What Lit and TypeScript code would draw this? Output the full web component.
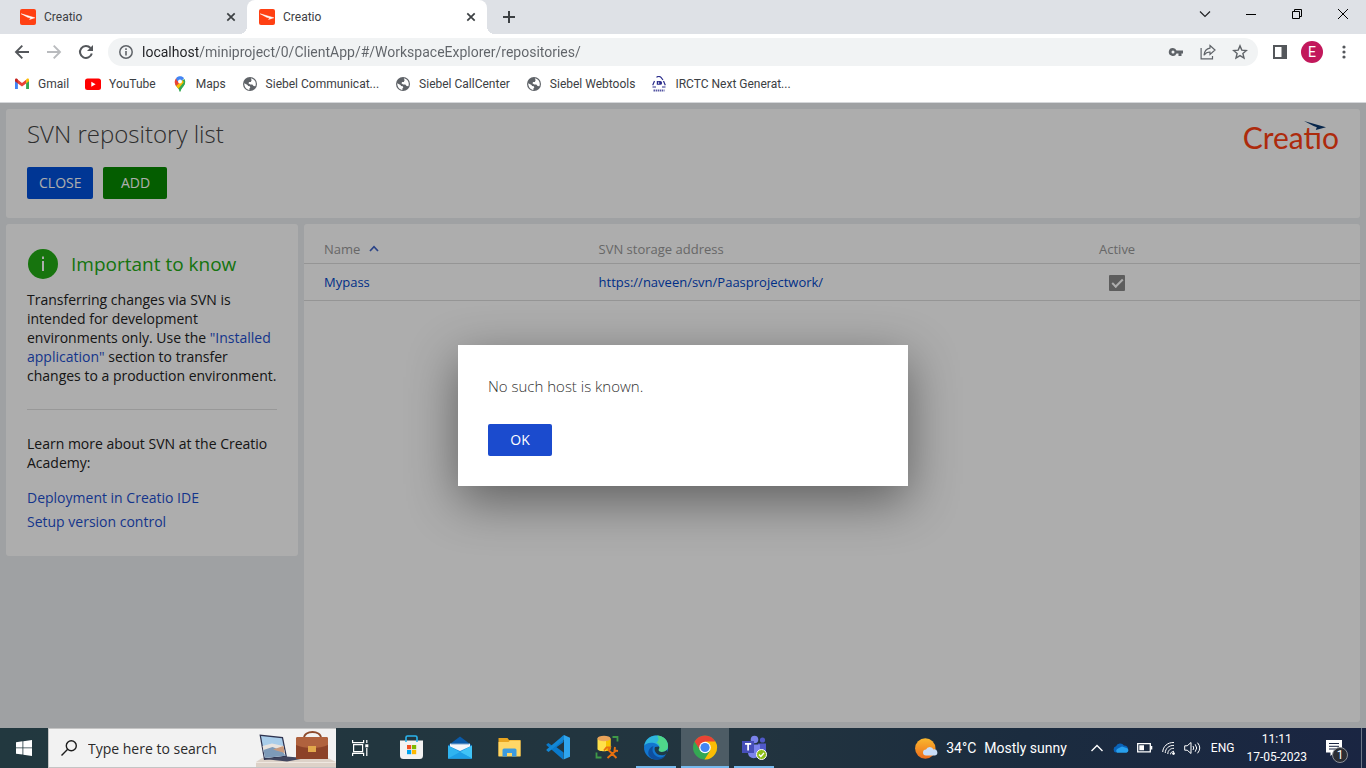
import { LitElement, html, css, svg, nothing } from "lit";
import { customElement, property } from "lit/decorators.js";
import { classMap } from "lit/directives/class-map.js";

const base = css`
  *,
  *::before,
  *::after {
    box-sizing: border-box;
  }
  button,
  input {
    font: inherit;
    color: inherit;
    border: 0;
    background: none;
    padding: 0;
    margin: 0;
  }
  a {
    text-decoration: none;
    color: inherit;
  }
  svg {
    display: block;
    flex: none;
  }
`;

const favicon = html`<svg width="16" height="16" viewBox="0 0 16 16">
  <rect width="16" height="16" rx="2" fill="#ff4013" />
  <path d="M1.200 4.800 14.800 8.800 9.600 10.400 10.800 8.900 7.600 8.200Z" fill="#fff" stroke="#fff" stroke-width=".5" />
</svg>`;

const cross = html`<svg width="10" height="10" viewBox="0 0 10 10">
  <path d="M1.3 1.3 8.7 8.7M8.7 1.3 1.3 8.7" stroke="#3c4043" stroke-width="1.7" />
</svg>`;

const globe = html`<svg width="16" height="16" viewBox="0 0 16 16">
  <circle cx="8" cy="8" r="7" fill="#5f6368" />
  <path
    d="M2.200 7.200 5.600 9 6 10 7.800 10.300 8.300 11.500 7.400 12.500v1.400C4.600 13.700 2.200 11 2.200 7.200ZM8.800 2.300C12 3 13.800 5.200 13.800 8c0 .9-.2 1.600-.5 2.300L11.600 9.900 10.300 8.400H8.100L6.400 7.300 7.100 5.900H8.800L9.600 4.300Z"
    fill="#fff"
  />
</svg>`;

const gmail = html`<svg width="16" height="16" viewBox="0 0 16 16">
  <path d="M1 4.200V13h2.900V6.800Z" fill="#4285f4" />
  <path d="M15 4.200V13h-2.900V6.800Z" fill="#34a853" />
  <path d="M12.100 3.600V7.500L15 5.300V3.800C15 2.400 13.400 2.200 12.600 2.900Z" fill="#fbbc04" />
  <path d="M3.900 7.500V3.800L8 6.900 12.100 3.800V7.500L8 10.600Z" fill="#ea4335" />
  <path d="M1 5.300V3.800C1 2.400 2.600 2.200 3.400 2.900L3.900 3.300V7.500Z" fill="#c5221f" />
</svg>`;

const youtube = html`<svg width="16" height="16" viewBox="0 0 16 16">
  <rect y="2.500" width="16" height="11.500" rx="2.500" fill="#f00" />
  <path d="M6.300 5.700v5L10.600 8.200Z" fill="#fff" />
</svg>`;

const maps = html`<svg width="16" height="16" viewBox="0 0 16 16">
  <path d="M8 16C7.300 13 4.400 11.200 3.300 8.600L12.500 3c1.700 3.700-.2 6-1.700 8C9.400 12.800 8.700 13.800 8 16Z" fill="#34a853" />
  <path d="M4 9.800 9.900 3 12.300 7C11 9.500 8 11.300 6.500 13.100Z" fill="#fbbc04" />
  <path d="M3.300 8.600C2.300 6.500 2.600 4 4.100 2.300L8.400 5.900 4 10Z" fill="#ea4335" />
  <path d="M4.100 2.300C6-.2 10-.3 12 2.200L8 7 4.900 4.400Z" fill="#4285f4" />
  <path d="M9.300 13.200C10.800 10.500 13.800 8.500 13 4.700L6.600 12.500 8 16Z" fill="#34a853" />
  <circle cx="8" cy="5.400" r="2" fill="#fff" />
</svg>`;

const irctc = html`<svg width="16" height="16" viewBox="0 0 16 16">
  <g fill="none" stroke="#2b2d8c" stroke-width="1.200">
    <path d="M5.500 1.400A3 3 0 0 1 10 1.400L12 4" />
    <path d="M3.500 5 1.700 9.200M1.500 11h3.500M12.500 5 14.300 9.200M14.500 11h-3.500" />
  </g>
  <path d="M5.800 5h3.400a1.800 1.800 0 0 1 0 3.800H5.800Z" fill="#2b2d8c" />
  <path d="M7.700 5.800v2.200" stroke="#fff" stroke-width=".8" />
  <path d="M2.500 14.500h11" stroke="#2b2d8c" stroke-width="1.800" stroke-dasharray="1.500 .6" opacity=".8" />
</svg>`;

const bookmarks = [
  { label: "Gmail", icon: gmail },
  { label: "YouTube", icon: youtube },
  { label: "Maps", icon: maps },
  { label: "Siebel Communicat...", icon: globe },
  { label: "Siebel CallCenter", icon: globe },
  { label: "Siebel Webtools", icon: globe },
  { label: "IRCTC Next Generat...", icon: irctc },
];

@customElement("browser-chrome")
export class BrowserChrome extends LitElement {
  static styles = [
    base,
    css`
      :host {
        display: block;
        flex: none;
        font: 12px/16px Roboto, "Noto Sans", sans-serif;
        color: #3c4043;
        background: #fff;
        border-bottom: 1px solid #d5d7da;
      }
      .strip {
        display: flex;
        height: 34px;
        background: #dee1e6;
      }
      .tab {
        position: relative;
        display: flex;
        align-items: center;
        gap: 8px;
        width: 240px;
        padding: 0 11px 0 12px;
        border-radius: 8px 8px 0 0;
      }
      .tab.first {
        margin-left: 8px;
        width: 239px;
      }
      .tab.active {
        background: #fff;
      }
      .tab.active::before,
      .tab.active::after {
        content: "";
        position: absolute;
        bottom: 0;
        width: 8px;
        height: 8px;
      }
      .tab.active::before {
        right: 100%;
        background: radial-gradient(circle at 0 0, #0000 8px, #fff 8px);
      }
      .tab.active::after {
        left: 100%;
        background: radial-gradient(circle at 100% 0, #0000 8px, #fff 8px);
      }
      .tab-title {
        flex: 1;
      }
      .icon {
        display: grid;
        place-items: center;
      }
      .tab .icon {
        width: 10px;
      }
      .new-tab {
        width: 44px;
      }
      .window {
        display: flex;
        margin-left: auto;
      }
      .window .icon {
        width: 46px;
        height: 28px;
      }
      .toolbar {
        display: flex;
        align-items: center;
        height: 36px;
        padding: 0 6px;
      }
      .toolbar .icon {
        width: 32px;
        height: 28px;
      }
      .omnibox {
        flex: 1;
        display: flex;
        align-items: center;
        margin: 0 6px;
        padding: 0 2px;
        height: 28px;
        border-radius: 14px;
        background: #f1f3f4;
      }
      .url {
        flex: 1;
        min-width: 0;
        font-size: 14px;
        line-height: 20px;
        color: transparent;
        background: linear-gradient(90deg, #202124 56px, #5f6368 56px);
        background-clip: text;
        -webkit-background-clip: text;
      }
      .avatar {
        display: grid;
        place-items: center;
        width: 22px;
        height: 22px;
        border-radius: 50%;
        background: #c2185b;
        color: #fff;
        font-size: 14px;
      }
      .bookmarks {
        display: flex;
        gap: 16px;
        padding: 0 14px 4px;
      }
      .bookmark {
        display: flex;
        align-items: center;
        gap: 8px;
        height: 28px;
        white-space: nowrap;
      }
    `,
  ];

  render() {
    return html`
      <div class="strip">
        ${[0, 1].map(
          (i) => html`<div class=${classMap({ tab: true, first: i === 0, active: i === 1 })}>
            ${favicon}<span class="tab-title">Creatio</span>
            <button class="icon" aria-label="Close tab">${cross}</button>
          </div>`
        )}
        <button class="icon new-tab" aria-label="New tab">
          <svg width="12" height="12" viewBox="0 0 12 12"><path d="M6 0v12M0 6h12" stroke="#3c4043" stroke-width="2" /></svg>
        </button>
        <div class="window">
          <button class="icon" aria-label="Search tabs">
            <svg width="12" height="8" viewBox="0 0 12 8"><path d="M1 1.500 6 6.500 11 1.500" fill="none" stroke="#202124" stroke-width="1.200" /></svg>
          </button>
          <button class="icon" aria-label="Minimize">
            <svg width="10" height="10" viewBox="0 0 10 10"><path d="M0 5.500h10" stroke="#000" /></svg>
          </button>
          <button class="icon" aria-label="Restore">
            <svg width="10" height="10" viewBox="0 0 10 10">
              <path d="M.5 2.500h7v7h-7ZM2.500 2.500V.5h7v7H7.500" fill="none" stroke="#000" />
            </svg>
          </button>
          <button class="icon" aria-label="Close">
            <svg width="12" height="12" viewBox="0 0 12 12"><path d="M1 1 11 11M11 1 1 11" stroke="#000" /></svg>
          </button>
        </div>
      </div>
      <div class="toolbar">
        <button class="icon" aria-label="Back">
          <svg width="16" height="16" viewBox="0 0 16 16">
            <path d="M15 8H2.500M8.300 1.700 2 8l6.300 6.300" fill="none" stroke="#54575b" stroke-width="1.900" />
          </svg>
        </button>
        <button class="icon" aria-label="Forward">
          <svg width="16" height="16" viewBox="0 0 16 16">
            <path d="M1 8h12.500M7.700 1.700 14 8l-6.300 6.300" fill="none" stroke="#b9bbbe" stroke-width="1.900" />
          </svg>
        </button>
        <button class="icon" aria-label="Reload">
          <svg width="16" height="16" viewBox="0 0 16 16">
            <path d="M13.800 9.500A6 6 0 1 1 12.500 4" fill="none" stroke="#54575b" stroke-width="2" />
            <path d="M15 1v6H9Z" fill="#54575b" />
          </svg>
        </button>
        <div class="omnibox">
          <button class="icon" aria-label="Site information">
            <svg width="14" height="14" viewBox="0 0 14 14">
              <circle cx="7" cy="7" r="6.200" fill="none" stroke="#5f6368" stroke-width="1.500" />
              <path d="M7 6v4.500M7 3.300v1.600" stroke="#5f6368" stroke-width="1.600" />
            </svg>
          </button>
          <input
            class="url"
            aria-label="Address"
            value="localhost/miniproject/0/ClientApp/#/WorkspaceExplorer/repositories/"
          />
          <button class="icon" aria-label="Passwords">
            <svg width="16" height="16" viewBox="0 0 16 16">
              <path
                fill-rule="evenodd"
                d="M5 4a4 4 0 1 0 3.500 5.500H10.500V12h3V9.500H15v-3H8.500A4 4 0 0 0 5 4ZM5 6.500a1.500 1.500 0 1 1 0 3 1.500 1.500 0 0 1 0-3Z"
                fill="#5f6368"
              />
            </svg>
          </button>
          <button class="icon" aria-label="Share">
            <svg width="16" height="16" viewBox="0 0 16 16" fill="none" stroke="#5f6368" stroke-width="1.200">
              <path d="M1.100 4v10.900h11.400V12" />
              <path d="M10 1.500 15 6 10 10.400V8C7.300 8 5.500 9 4 11.200 4.400 7.300 6.500 4.600 10 4.100Z" />
            </svg>
          </button>
          <button class="icon" aria-label="Bookmark this tab">
            <svg width="16" height="16" viewBox="0 0 16 16">
              <path
                d="m8 1.900 1.800 4.200 4.600.4-3.500 3 1.100 4.500L8 11.600 4 14l1.100-4.500-3.500-3 4.600-.4Z"
                fill="none"
                stroke="#5f6368"
                stroke-width="1.400"
              />
            </svg>
          </button>
        </div>
        <button class="icon" aria-label="Side panel">
          <svg width="14" height="14" viewBox="0 0 14 14">
            <path d="M1 1h12v12H1Z" fill="none" stroke="#54575b" stroke-width="2" />
            <path d="M8.500 0H14v14H8.500Z" fill="#54575b" />
          </svg>
        </button>
        <button class="icon" aria-label="Profile"><span class="avatar">E</span></button>
        <button class="icon" aria-label="Menu">
          <svg width="4" height="14" viewBox="0 0 4 14" fill="#54575b">
            <circle cx="2" cy="2" r="1.600" /><circle cx="2" cy="7" r="1.600" /><circle cx="2" cy="12" r="1.600" />
          </svg>
        </button>
      </div>
      <nav class="bookmarks" aria-label="Bookmarks">
        ${bookmarks.map((b) => html`<a class="bookmark" href="#">${b.icon}<span>${b.label}</span></a>`)}
      </nav>
    `;
  }
}

@customElement("repository-page")
export class RepositoryPage extends LitElement {
  static styles = [
    base,
    css`
      :host {
        flex: 1;
        min-height: 0;
        display: flex;
        flex-direction: column;
        gap: 6px;
        padding: 6px;
        background: #ebedf0;
        color: #222;
        font: 14px/19px "Open Sans", "Noto Sans", sans-serif;
      }
      .card {
        background: #fff;
        border-radius: 3px;
      }
      .header {
        display: flex;
        justify-content: space-between;
        align-items: flex-start;
        padding: 8px 21px 19px;
      }
      h1 {
        margin: 0 0 17px;
        font-weight: 300;
        font-size: 24px;
        line-height: 33px;
        color: #444;
      }
      .actions {
        display: flex;
        gap: 10px;
      }
      .btn {
        min-width: 64px;
        height: 32px;
        padding: 0 12px 2px;
        border-radius: 2px;
        color: #fff;
        background: #0050da;
      }
      .btn.add {
        background: #078a00;
      }
      .logo {
        position: relative;
        font: 30px/40px Lato, sans-serif;
        color: #ff4013;
      }
      .bird {
        position: absolute;
        top: 4px;
        right: 13px;
      }
      .columns {
        flex: 1;
        display: flex;
        align-items: flex-start;
        gap: 6px;
        min-height: 0;
      }
      .info {
        width: 292px;
        flex: none;
        padding: 25px 20px 22px 21px;
      }
      .info-title {
        display: flex;
        align-items: center;
        gap: 13px;
        margin: 0 0 11px;
        padding-left: 1px;
        font-size: 19px;
        font-weight: 400;
        line-height: 30px;
        color: #22ab15;
      }
      p {
        margin: 0;
      }
      hr {
        margin: 24px 1px 24px 0;
        border: 0;
        border-top: 1px solid #e0e0e0;
      }
      .info a {
        color: #1d4fce;
      }
      .links {
        margin: 14px 0 0;
        padding: 0;
        list-style: none;
        line-height: 24px;
      }
      .list {
        flex: 1;
        align-self: stretch;
      }
      table {
        width: 100%;
        table-layout: fixed;
        border-collapse: collapse;
        font-size: 13px;
        line-height: 18px;
      }
      th,
      td {
        text-align: left;
        border-bottom: 1px solid #dcdcdc;
        font-weight: 400;
      }
      th {
        padding: 16px 20px 5px;
        color: #999;
      }
      td {
        height: 37px;
        padding: 0 20px;
      }
      td a {
        color: #0046c8;
      }
      .name {
        width: 26%;
      }
      .address {
        width: 47%;
      }
      .active {
        width: 8%;
      }
      .center {
        text-align: center;
      }
      .sort {
        display: flex;
        align-items: center;
        gap: 9px;
      }
      input {
        appearance: none;
        display: inline-grid;
        place-items: center;
        width: 16px;
        height: 16px;
        border-radius: 1px;
        background: #8a8a8a;
        vertical-align: middle;
      }
      input::after {
        content: "";
        width: 11px;
        height: 6px;
        margin-bottom: 3px;
        border: solid #fff;
        border-width: 0 0 2px 2px;
        transform: rotate(-45deg);
      }
    `,
  ];

  render() {
    return html`
      <header class="card header">
        <div>
          <h1>SVN repository list</h1>
          <div class="actions">
            <button class="btn">CLOSE</button>
            <button class="btn add">ADD</button>
          </div>
        </div>
        <div class="logo" role="img" aria-label="Creatio">
          Creatıo
          <svg class="bird" width="22" height="10" viewBox="0 0 22 10">
            <path d="M0 0 22 6.300 11.800 9 12.800 6.300 9.500 5Z" fill="#0c3a70" />
          </svg>
        </div>
      </header>
      <div class="columns">
        <aside class="card info">
          <h2 class="info-title">
            <svg width="30" height="30" viewBox="0 0 30 30">
              <circle cx="15" cy="15" r="15" fill="#22ab15" />
              <path d="M15 12v10M15 7.500v2.500" stroke="#fff" stroke-width="2" />
            </svg>
            Important to know
          </h2>
          <p>
            Transferring changes via SVN is intended for development environments only. Use the
            <a href="#">"Installed application"</a> section to transfer changes to a production environment.
          </p>
          <hr />
          <p>Learn more about SVN at the Creatio Academy:</p>
          <ul class="links">
            <li><a href="#">Deployment in Creatio IDE</a></li>
            <li><a href="#">Setup version control</a></li>
          </ul>
        </aside>
        <main class="card list">
          <table>
            <thead>
              <tr>
                <th class="name">
                  <span class="sort"
                    >Name
                    <svg width="10" height="8" viewBox="0 0 10 8">
                      <path d="M1 6 5 1.700 9 6" fill="none" stroke="#3f63c8" stroke-width="1.700" /></svg
                  ></span>
                </th>
                <th class="address">SVN storage address</th>
                <th class="active center">Active</th>
                <th></th>
              </tr>
            </thead>
            <tbody>
              <tr>
                <td><a href="#">Mypass</a></td>
                <td><a href="#">https://naveen/svn/Paasprojectwork/</a></td>
                <td class="center"><input type="checkbox" aria-label="Active" checked /></td>
                <td></td>
              </tr>
            </tbody>
          </table>
        </main>
      </div>
    `;
  }
}

@customElement("message-dialog")
export class MessageDialog extends LitElement {
  @property() message = "";

  static styles = [
    base,
    css`
      :host {
        position: absolute;
        inset: 0;
        display: grid;
        place-items: center;
        background: rgba(0, 0, 0, 0.32);
        font: 14px/22px "Open Sans", "Noto Sans", sans-serif;
      }
      .box {
        width: 450px;
        padding: 30px;
        background: #fff;
        box-shadow: 0 15px 50px rgba(0, 0, 0, 0.45);
      }
      p {
        margin: 0 0 27px;
        font-weight: 300;
        font-size: 15px;
        color: #333;
      }
      button {
        display: block;
        width: 64px;
        height: 32px;
        border-radius: 2px;
        color: #fff;
        background: #1b4bce;
      }
    `,
  ];

  render() {
    return html`<div class="box" role="alertdialog" aria-label="Message">
      <p>${this.message}</p>
      <button>OK</button>
    </div>`;
  }
}

const apps = [
  {
    name: "Microsoft Store",
    state: "",
    icon: svg`
      <path d="M1 5.500h23v15A3.500 3.500 0 0 1 20.500 24h-16A3.500 3.500 0 0 1 1 20.500Z" fill="#f3f3f3"/>
      <path d="M7 7V2.500A1.500 1.500 0 0 1 8.500 1h8A1.500 1.500 0 0 1 18 2.500V7" fill="none" stroke="#2bb5ee" stroke-width="1.600"/>
      <path d="M8 10h4.200v4.200H8Z" fill="#f25022"/><path d="M13 10h4.200v4.200H13Z" fill="#7fba00"/>
      <path d="M8 15h4.200v4.200H8Z" fill="#00a4ef"/><path d="M13 15h4.200v4.200H13Z" fill="#ffb900"/>`,
  },
  {
    name: "Mail",
    state: "",
    icon: svg`
      <path d="M0 10.500 12 1.500 24 10.500Z" fill="#0a5aa8"/>
      <path d="M0 10.500h24v13H0Z" fill="#1f8fdc"/>
      <path d="M2 8.500h20v3L12 16 2 11.500Z" fill="#f5f7fa"/>
      <path d="M2 8.500h20l-1 .8H3Z" fill="#0a5aa8"/>
      <path d="M0 10.500 12 17 24 23.500H0Z" fill="#2fb4f0"/>
      <path d="M24 10.500V23.500L12 17Z" fill="#40c4f7"/>
      <path d="M0 23.500 12 17 24 23.500Z" fill="#1e9fe6"/>`,
  },
  {
    name: "File Explorer",
    state: "",
    icon: svg`
      <path d="M1.500 3h9l1.500 2h11.500v16H1.500Z" fill="#e9a520"/>
      <path d="M1.500 7h10l1.500-1.500h10.500v16h-22Z" fill="#ffd767"/>
      <path d="M5.500 21.500V15A1.500 1.500 0 0 1 7 13.500h11A1.500 1.500 0 0 1 19.500 15v6.500H15V18h-5v3.500Z" fill="#3c9be0"/>`,
  },
  {
    name: "Visual Studio Code",
    state: "",
    icon: svg`
      <path d="M17.500 0 6.500 11 2.500 8 .5 9.300v1L17 24.500Z" fill="#0a7acc"/>
      <path d="M.5 15.500 2.500 17 18 4.500V0L.5 14.500Z" fill="#1387d4"/>
      <path d="M18 0 24 2.800V21.700L17.500 24.500Z" fill="#2fa5ee"/>
      <path d="M18 6.800V17.700L10.500 12.200Z" fill="#223640"/>`,
  },
  {
    name: "Database Tools",
    state: "",
    icon: svg`
      <path d="M2.500 3.500h13V14c0 3-13 3-13 0Z" fill="#ffe14a"/>
      <path d="M11 4h4.500v10c0 1-2 1.700-4.500 2Z" fill="#f5c400"/>
      <ellipse cx="9" cy="3.500" rx="6.500" ry="2.700" fill="#e9a35a"/>
      <path d="M17.500 2h5v4.500M1.500 17.500v5h5" fill="none" stroke="#3f9a48" stroke-width="1.800"/>
      <path d="M9 15.500 11.500 12.500H15L13.500 15 21.500 23M20.500 16 12.500 23M20 12l-.5 3.500 3.500.500" fill="none" stroke="#e8700f" stroke-width="1.900"/>`,
  },
  {
    name: "Microsoft Edge",
    state: "running",
    icon: svg`
      <circle cx="12" cy="12.500" r="12" fill="#1276cf"/>
      <path d="M.2 11C1.500 4 6.500.5 12 .5c7 0 12 4.800 12 10.500 0 3.500-2.500 6-6 6-3.500 0-4.500-1.500-3-3C16 12.500 14.500 9 10 8 5 7 1 9 .2 11Z" fill="#2fb6dc"/>
      <path d="M13 .6C20 1 24 5.500 24 11c0 3.500-2.500 6-6 6-3.500 0-4.500-1.500-3-3 1.500-2 .5-5-2.500-6.500C15 6 15 3 13 .6Z" fill="#4fd68a"/>
      <path d="M9.500 11C7.500 14 8 21 16 22.500c2.500 0 4.500-.8 6-2.500-4 6-12 6-16 2C2.500 18.500 4.500 12.500 9.500 11Z" fill="#0d4f9f"/>
      <path d="M11 12C9.500 15 12 20.500 18 20.300c2 0 3.500-.8 5-1.800v-3.500c-3 2.500-8 2.500-8.500 0C14.500 14 16 13 15 11.500Z" fill="#1f3a48"/>`,
  },
  {
    name: "Google Chrome",
    state: "current",
    icon: svg`
      <circle cx="12" cy="12.500" r="12" fill="#34a853"/>
      <path d="M1.600 6.500A12 12 0 0 1 22.400 6.500L17 14.500 12 7 7 15Z" fill="#ea4335"/>
      <path d="M12 6.500H22.400A12 12 0 0 1 11.500 24.500L17.200 15.500Z" fill="#fbbc04"/>
      <circle cx="12" cy="12.500" r="5.800" fill="#fff"/>
      <circle cx="12" cy="12.500" r="4.600" fill="#4285f4"/>`,
  },
  {
    name: "Microsoft Teams",
    state: "running",
    icon: svg`
      <circle cx="20.500" cy="5" r="2.600" fill="#5059c9"/>
      <circle cx="12.500" cy="4.500" r="3.800" fill="#7b83eb"/>
      <path d="M16 8.500h8v8c0 4-6 5-8 1Z" fill="#5059c9"/>
      <path d="M6 9.500h12v8c0 7-12 8-12 0Z" fill="#7b83eb"/>
      <path d="M0 6h12v12H0Z" fill="#464eb8"/>
      <path d="M3 8.800h6.200M6.100 8.800v6.700" stroke="#fff" stroke-width="1.700"/>
      <circle cx="19.500" cy="19.500" r="5" fill="#8cbd18" stroke="#fff"/>
      <path d="m17 19.600 1.800 1.900 3.200-3.600" fill="none" stroke="#fff" stroke-width="1.400"/>`,
  },
];

@customElement("task-bar")
export class TaskBar extends LitElement {
  static styles = [
    base,
    css`
      :host {
        flex: none;
        display: flex;
        height: 40px;
        color: #fff;
        background: linear-gradient(90deg, #22383f, #22343f 55%, #1b2c3f 75%, #1a2542);
        font: 12px/18px Roboto, "Noto Sans", sans-serif;
      }
      button {
        display: grid;
        place-items: center;
      }
      .start,
      .view {
        width: 48px;
      }
      .search {
        display: flex;
        align-items: center;
        gap: 11px;
        width: 288px;
        padding-left: 12px;
        background: #f2f2f2;
        border: 1px solid #c4c4c4;
        border-right: 0;
      }
      .search input {
        flex: 1;
        min-width: 0;
        padding-top: 2px;
        font: 14px/20px "Open Sans", "Noto Sans", sans-serif;
      }
      .search input::placeholder {
        color: #2b2b2b;
        opacity: 1;
      }
      .apps {
        display: flex;
        gap: 1px;
        padding-left: 3px;
      }
      .app {
        width: 48px;
        border-bottom: 2px solid transparent;
      }
      .app.running {
        width: 40px;
        margin: 0 4px;
        border-color: #76b9ed;
      }
      .app.current {
        background: #4d5c65;
        border-color: #76b9ed;
      }
      .tray {
        display: flex;
        align-items: center;
        margin-left: auto;
      }
      .weather {
        display: flex;
        align-items: center;
        gap: 8px;
        margin-right: 18px;
        font-size: 14px;
      }
      .tray-icon {
        width: 24px;
        height: 40px;
      }
      .lang {
        padding: 0 12px 0 6px;
      }
      .clock {
        text-align: center;
      }
      .notify {
        position: relative;
        width: 54px;
        height: 40px;
      }
      .count {
        position: absolute;
        left: 25px;
        top: 19px;
        width: 16px;
        height: 16px;
        border: 1px solid #8d9198;
        border-radius: 50%;
        background: #2b2d33;
        line-height: 14px;
      }
      .peek {
        align-self: stretch;
        width: 5px;
        border-left: 1px solid #6d7687;
      }
    `,
  ];

  render() {
    return html`
      <button class="start" aria-label="Start">
        <svg width="16" height="16" viewBox="0 0 16 16" fill="#fff">
          <path d="M0 2.200 6.500 1.300V7.500H0ZM7.300 1.200 16 0V7.500H7.300ZM0 8.300H6.500V14.600L0 13.700ZM7.300 8.300H16V16L7.300 14.800Z" />
        </svg>
      </button>
      <label class="search">
        <svg width="16" height="16" viewBox="0 0 16 16" fill="none" stroke="#1d1d1d" stroke-width="1.400">
          <circle cx="10.300" cy="5.700" r="5" /><path d="M6.700 9.300.5 15.500" />
        </svg>
        <input placeholder="Type here to search" aria-label="Type here to search" />
        <svg width="80" height="38" viewBox="0 0 80 38">
          <path d="M0 33 6 29h66l8 4v5H0Z" fill="#ddd2c8" />
          <path d="M0 33h80v1H0Z" fill="#efe8e1" />
          <path d="M3.500 5.500 27 8l4 20-23 3Z" fill="#2e3350" />
          <path d="M5 7 26 9.200l3.400 17.600L9 29Z" fill="#a9cdea" />
          <path d="M6.500 17 16 14.500l11.500 2.500 1.900 9.800L9 29Z" fill="#e8e3df" />
          <path d="m7.500 21 9-3 10 4 2.900 4.800L9 29Z" fill="#7d9ab8" />
          <path d="M17 20.500 27.500 17l1.200 7Z" fill="#c99a7d" />
          <path d="M8 30 30 27.500l20 1.500-19 3.500Z" fill="#41465f" />
          <path d="M48 9c0-8 17-8 17 0" fill="none" stroke="#8d4a2c" stroke-width="1.800" />
          <path d="M40 10q0-2 2-2h28q2 0 2 2v20H40Z" fill="#8c4228" />
          <path d="M40 10q0-2 2-2h28q2 0 2 2v6c-8 4-24 4-32 0Z" fill="#b0623e" />
          <path d="M52 17h8v6h-8Z" fill="#e2a74b" />
        </svg>
      </label>
      <button class="view" aria-label="Task view">
        <svg width="18" height="16" viewBox="0 0 18 16" fill="none" stroke="#fff" stroke-width="1.200">
          <path d="M2.600 4.600h9v7h-9ZM1.600 0v2.600h11V0M1.600 16v-2.600h11V16M15.800 0v3M15.800 8v8" />
          <path d="M14.300 4.300h3v3h-3Z" fill="#fff" stroke="none" />
        </svg>
      </button>
      <div class="apps">
        ${apps.map(
          (a) => html`<button
            class=${classMap({ app: true, running: a.state === "running", current: a.state === "current" })}
            aria-label=${a.name}
          >
            <svg width="25" height="25" viewBox="0 0 25 25">${a.icon ?? nothing}</svg>
          </button>`
        )}
      </div>
      <div class="tray">
        <div class="weather">
          <svg width="23" height="21" viewBox="0 0 23 21">
            <defs>
              <linearGradient id="sun" x1="0" y1="0" x2="0" y2="1">
                <stop stop-color="#f9b72e" /><stop offset="1" stop-color="#ee6c1a" />
              </linearGradient>
            </defs>
            <circle cx="10.300" cy="10.500" r="10.200" fill="url(#sun)" />
            <path d="M11 17.500a3 3 0 0 1 0-6 4 4 0 0 1 7.500 0 3 3 0 0 1 1.500 6Z" fill="#c9ddf8" />
          </svg>
          <span>34°C</span><span>Mostly sunny</span>
        </div>
        <button class="tray-icon" aria-label="Show hidden icons">
          <svg width="12" height="8" viewBox="0 0 12 8"><path d="M.5 7 6 1.500 11.500 7" fill="none" stroke="#fff" stroke-width="1.400" /></svg>
        </button>
        <button class="tray-icon" aria-label="OneDrive">
          <svg width="16" height="10" viewBox="0 0 16 10">
            <path d="M3 9.500A3.200 3.200 0 0 1 3 3.300 4.600 4.600 0 0 1 11 2.500 4 4 0 0 1 15 6.500Z" fill="#0a63b8" />
            <path d="M4 9.700A2.500 2.500 0 0 1 5 5.500L9 3.600 13.500 5a2.400 2.400 0 0 1 0 4.700Z" fill="#28a0ec" />
          </svg>
        </button>
        <button class="tray-icon" aria-label="Battery">
          <svg width="16" height="10" viewBox="0 0 16 10">
            <path d="M.7.700h12.600v8.200H.7Z" fill="none" stroke="#fff" stroke-width="1.300" />
            <path d="M2.300 2.300h4.700v5H2.300ZM14 3h1.300v3.600H14Z" fill="#fff" />
          </svg>
        </button>
        <button class="tray-icon" aria-label="Network">
          <svg width="14" height="14" viewBox="0 0 14 14" fill="none" stroke="#fff">
            <path d="M.7 11C1 5.500 5.500 1.200 12 1.500M3.200 12C3.400 7.500 6.800 4.300 12 4.400M5.800 13c0-3.500 2.500-5.700 6.200-5.700M8.500 13.300c0-1.800 1.500-3 3.500-3" />
            <circle cx="11.500" cy="12.500" r="1" fill="#fff" />
          </svg>
        </button>
        <button class="tray-icon" aria-label="Volume">
          <svg width="17" height="14" viewBox="0 0 17 14" fill="none" stroke="#fff">
            <path d="M.7 4.800h2.500L7 1.500v11L3.200 9.200H.7ZM9 5q1.500 2 0 4M11.200 3.300q3 3.700 0 7.400M13.500 1.700q4.500 5.300 0 10.600" />
          </svg>
        </button>
        <span class="lang">ENG</span>
        <div class="clock">11:11<br />17-05-2023</div>
        <button class="notify" aria-label="Notifications">
          <svg width="16" height="16" viewBox="0 0 16 16">
            <path d="M0 0h16v12.500H8L4.500 16v-3.500H0Z" fill="#fff" />
            <path d="M3 3.500h10M3 6.300h10M3 9h7" stroke="#1a2542" />
          </svg>
          <span class="count">1</span>
        </button>
        <div class="peek"></div>
      </div>
    `;
  }
}

@customElement("app-root")
export class AppRoot extends LitElement {
  static styles = css`
    :host {
      display: flex;
      flex-direction: column;
      height: 100vh;
    }
    .viewport {
      position: relative;
      flex: 1;
      min-height: 0;
      display: flex;
      overflow: hidden;
    }
  `;

  render() {
    return html`
      <browser-chrome></browser-chrome>
      <div class="viewport">
        <repository-page></repository-page>
        <message-dialog message="No such host is known."></message-dialog>
      </div>
      <task-bar></task-bar>
    `;
  }
}
